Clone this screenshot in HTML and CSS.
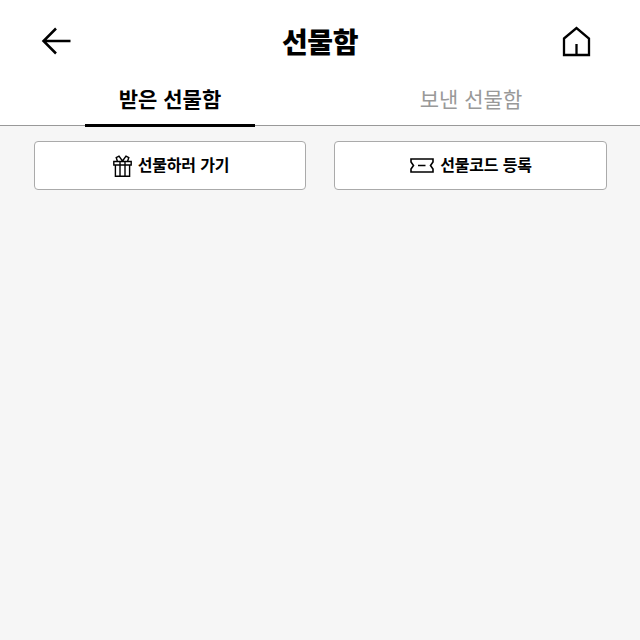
FILE: index.html
```html
<!DOCTYPE html>
<html lang="ko">
<head>
<meta charset="utf-8">
<title>선물함</title>
<link rel="stylesheet" href="styles.css">
</head>
<body>
<header class="top">
  <button class="icon-btn" aria-label="뒤로">
    <svg width="32" height="32" viewBox="0 0 32 32"><path d="M15 3.500 2.500 16 15 28.500M2.500 16H29.500" fill="none" stroke="#000" stroke-width="2.500"/></svg>
  </button>
  <h1 class="title">선물함</h1>
  <button class="icon-btn home" aria-label="홈">
    <svg width="30" height="32" viewBox="0 0 30 32"><path d="M3 13.500 15.500 3 28 13.500V30H3ZM15.500 19V30" fill="none" stroke="#000" stroke-width="2.300"/></svg>
  </button>
</header>
<nav class="tabs">
  <div class="tab active"><span>받은 선물함</span></div>
  <div class="tab"><span>보낸 선물함</span></div>
</nav>
<main class="content">
  <button class="action">
    <svg class="gift" width="19" height="22" viewBox="0 0 19 22"><path d="M.8 6.500H18.200V10H.8ZM2.400 10V21.200H16.600V10M7 6.500V21.200M12 6.500V21.200M9.500 6 6 1.200 3.200 2.500 4.500 6.500M9.500 6 13 1.200 15.800 2.500 14.500 6.500" fill="none" stroke="#000" stroke-width="1.400"/></svg>
    <span class="label">선물하러 가기</span>
  </button>
  <button class="action">
    <svg class="ticket" width="24" height="15" viewBox="0 0 24 15"><path d="M1 1H23V4L20.500 7.500 23 11V14H1V11L3.500 7.500 1 4ZM8 7.500H15.500" fill="none" stroke="#000" stroke-width="1.600"/></svg>
    <span class="label">선물코드 등록</span>
  </button>
</main>
</body>
</html>
```
FILE: styles.css
```css
* { box-sizing: border-box; }
html, body { height: 100%; }
body {
  margin: 0;
  display: flex;
  flex-direction: column;
  background: #f6f6f6;
  color: #000;
  font-family: "Noto Sans CJK KR", "Noto Sans", sans-serif;
}
.top {
  height: 82px;
  padding: 0 41px;
  background: #fff;
  display: grid;
  grid-template-columns: 1fr auto 1fr;
  align-items: center;
}
.icon-btn {
  padding: 0;
  border: 0;
  background: none;
  display: flex;
}
.home {
  justify-self: end;
  margin-right: 8px;
}
.title {
  margin: 0;
  font-size: 28px;
  font-weight: 900;
  letter-spacing: -0.5px;
  line-height: 40px;
}
.tabs {
  height: 44px;
  padding: 0 20px;
  background: #fff;
  border-bottom: 1px solid #999;
  display: grid;
  grid-template-columns: 300px 302px;
}
.tab {
  display: flex;
  justify-content: center;
  color: #999;
  font-size: 21px;
  font-weight: 400;
  line-height: 32px;
}
.tab span {
  display: block;
  width: 170px;
  height: 45px;
  text-align: center;
}
.tab.active {
  color: #000;
  font-weight: 700;
}
.tab.active span { border-bottom: 3px solid #000; }
.content {
  padding: 15px 33px 0 34px;
  display: grid;
  grid-template-columns: 272px 273px;
  column-gap: 28px;
}
.action {
  height: 49px;
  padding: 0;
  border: 1px solid #aaa;
  border-radius: 4px;
  background: #fff;
  color: #000;
  font-family: inherit;
  font-size: 16px;
  font-weight: 700;
  letter-spacing: -0.2px;
  display: flex;
  align-items: center;
  justify-content: center;
  gap: 6px;
}
.gift { margin-left: 2px; }
.ticket { margin-left: 1px; }
.label { padding-bottom: 3px; }
```
